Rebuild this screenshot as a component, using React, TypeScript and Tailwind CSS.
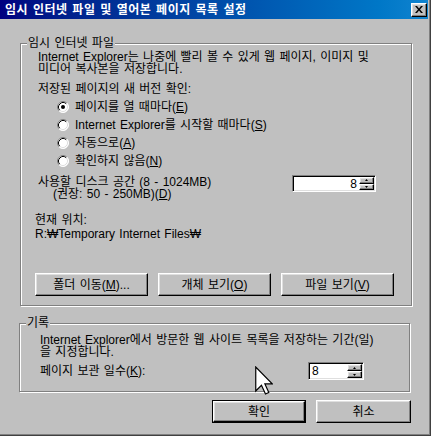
import type { ReactNode } from "react";

const raised =
  "border border-t-white border-l-white border-b-black border-r-black shadow-[inset_-1px_-1px_0_#808080,inset_1px_1px_0_#dfdfdf]";

function Mn({ children }: { children: ReactNode }) {
  return <span className="underline decoration-1 underline-offset-[1px]">{children}</span>;
}

function Radio({ checked }: { checked?: boolean }) {
  return (
    <svg width="12" height="12" viewBox="0 0 12 12" className="shrink-0">
      <circle cx="6" cy="6" r="5.5" fill="#fff" />
      <path d="M2.11 9.89 A5.5 5.5 0 0 1 9.89 2.11" stroke="#808080" fill="none" />
      <path d="M9.89 2.11 A5.5 5.5 0 0 1 2.11 9.89" stroke="#fff" fill="none" />
      <path d="M2.82 9.18 A4.5 4.5 0 0 1 9.18 2.82" stroke="#000" fill="none" />
      <path d="M9.18 2.82 A4.5 4.5 0 0 1 2.82 9.18" stroke="#dfdfdf" fill="none" />
      {checked ? <circle cx="6" cy="6" r="2" fill="#000" /> : null}
    </svg>
  );
}

function RadioRow({ checked, children }: { checked?: boolean; children: ReactNode }) {
  return (
    <div className="flex h-[18px] items-center gap-[6px] pl-[36px]">
      <Radio checked={checked} />
      <span>{children}</span>
    </div>
  );
}

function SpinHalf({ up }: { up?: boolean }) {
  return (
    <div className={`flex flex-1 items-center justify-center bg-[#c0c0c0] ${raised}`}>
      <svg width="3" height="2" viewBox="0 0 3 2">
        <path d={up ? "M1.5 0 L3 2 L0 2 Z" : "M0 0 L3 0 L1.5 2 Z"} fill="#000" />
      </svg>
    </div>
  );
}

function Spinner({ width, height, right }: { width: string; height: string; right?: boolean }) {
  return (
    <div
      className={`flex ${width} ${height} border border-t-[#808080] border-l-[#808080] border-b-white border-r-white bg-white shadow-[inset_1px_1px_0_#000,inset_-1px_-1px_0_#dfdfdf] p-[1px]`}
    >
      <div className={`flex flex-1 items-center ${right ? "justify-end pr-[2px]" : "pl-[2px]"}`}>8</div>
      <div className="flex w-[15px] flex-col">
        <SpinHalf up />
        <SpinHalf />
      </div>
    </div>
  );
}

function Button({ children, width, primary }: { children: ReactNode; width: string; primary?: boolean }) {
  const face = (
    <div className={`flex h-full w-full items-center justify-center bg-[#c0c0c0] ${raised}`}>{children}</div>
  );
  return primary ? (
    <div className={`${width} h-[23px] border border-black`}>{face}</div>
  ) : (
    <div className={`${width} h-[23px]`}>{face}</div>
  );
}

function Group({ label, className, children }: { label: string; className: string; children: ReactNode }) {
  return (
    <div
      className={`relative border border-[#808080] shadow-[inset_1px_1px_0_#fff,1px_1px_0_#fff] ${className}`}
    >
      <span className="absolute -top-[7px] left-[6px] bg-[#c0c0c0] px-[1px]">{label}</span>
      {children}
    </div>
  );
}

export default function App() {
  return (
    <div className="relative flex h-[436px] w-[431px] flex-col border-r border-b border-[#404040] bg-[#c0c0c0] font-['Liberation_Sans','Noto_Sans_CJK_KR',sans-serif] text-[12px] leading-[12px] text-black shadow-[inset_-1px_-1px_0_#808080] [word-spacing:1px]">
      <div className="mr-[2px] flex h-[19px] items-center justify-between bg-gradient-to-r from-[#000080] to-[#1084d0] pr-[1px] pl-[5px]">
        <span className="text-[12px] font-bold tracking-[0.5px] text-white">
          임시 인터넷 파일 및 열어본 페이지 목록 설정
        </span>
        <div className={`flex h-[14px] w-[16px] items-center justify-center bg-[#c0c0c0] ${raised}`}>
          <svg width="8" height="7" viewBox="0 0 8 7">
            <path d="M0 0h2l2 2.5L6 0h2L5 3.5 8 7H6L4 4.5 2 7H0l3-3.5z" fill="#000" />
          </svg>
        </div>
      </div>

      <Group label="임시 인터넷 파일" className="mt-[24px] ml-[20px] h-[263px] w-[392px]">
        <div className="pt-[7px] pl-[17px]">
          <div>Internet Explorer는 나중에 빨리 볼 수 있게 웹 페이지, 이미지 및</div>
          <div>미디어 복사본을 저장합니다.</div>
          <div className="mt-[8px]">저장된 페이지의 새 버전 확인:</div>
        </div>
        <div className="mt-[3px]">
          <RadioRow checked>
            페이지를 열 때마다(<Mn>E</Mn>)
          </RadioRow>
          <RadioRow>
            Internet Explorer를 시작할 때마다(<Mn>S</Mn>)
          </RadioRow>
          <RadioRow>
            자동으로(<Mn>A</Mn>)
          </RadioRow>
          <RadioRow>
            확인하지 않음(<Mn>N</Mn>)
          </RadioRow>
        </div>
        <div className="mt-[5px] flex items-start pl-[17px]">
          <div className="pt-[1px]">
            <div>사용할 디스크 공간 (8 - 1024MB)</div>
            <div className="pl-[15px]">
              (권장: 50 - 250MB)(<Mn>D</Mn>)
            </div>
          </div>
          <div className="mr-[35px] ml-auto">
            <Spinner width="w-[84px]" height="h-[17px]" right />
          </div>
        </div>
        <div className="mt-[14px] pl-[14px]">현재 위치:</div>
        <div className="mt-[2px] pl-[14px]">R:₩Temporary Internet Files₩</div>
        <div className="mt-[33px] flex gap-[10px] pl-[14px]">
          <Button width="w-[113px]">
            폴더 이동(<Mn>M</Mn>)...
          </Button>
          <Button width="w-[113px]">
            개체 보기(<Mn>O</Mn>)
          </Button>
          <Button width="w-[113px]">
            파일 보기(<Mn>V</Mn>)
          </Button>
        </div>
      </Group>

      <Group label="기록" className="mt-[17px] ml-[19px] h-[69px] w-[391px]">
        <div className="pt-[10px] pl-[20px]">
          <div>Internet Explorer에서 방문한 웹 사이트 목록을 저장하는 기간(일)</div>
          <div>을 지정합니다.</div>
        </div>
        <div className="mt-[4px] flex h-[18px] items-center pl-[20px]">
          <span>
            페이지 보관 일수(<Mn>K</Mn>):
          </span>
          <div className="mr-[45px] ml-auto">
            <Spinner width="w-[56px]" height="h-[18px]" />
          </div>
        </div>
      </Group>

      <div className="mt-[8px] flex justify-end gap-[10px] pr-[19px]">
        <Button width="w-[94px]" primary>
          확인
        </Button>
        <Button width="w-[95px]">취소</Button>
      </div>

      <svg
        width="18"
        height="29"
        viewBox="0 0 12 19"
        className="absolute top-[366px] left-[255px]"
      >
        <path
          d="M0.5 0.5 L0.5 16.5 L4.3 12.7 L7 18.5 L9.2 17.5 L6.6 11.8 L11.5 11.8 Z"
          fill="#fff"
          stroke="#000"
          strokeWidth="0.8"
          strokeLinejoin="miter"
        />
      </svg>
    </div>
  );
}
